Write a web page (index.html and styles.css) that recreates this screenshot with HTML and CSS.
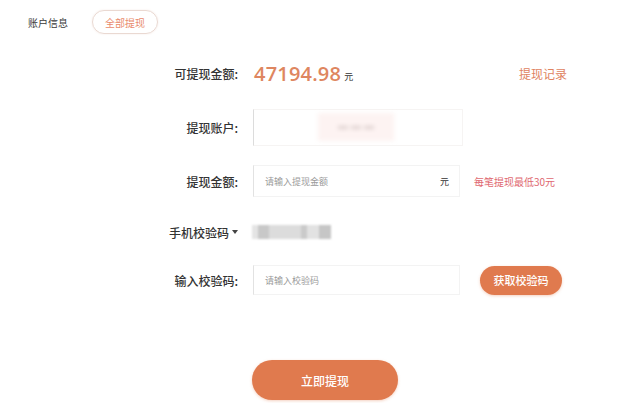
FILE: index.html
```html
<!DOCTYPE html>
<html lang="zh-CN">
<head>
<meta charset="utf-8">
<title>账户信息</title>
<link rel="stylesheet" href="styles.css">
</head>
<body>
<div class="page">
  <header class="tabs">
    <span class="tab-title">账户信息</span>
    <span class="tab-pill">全部提现</span>
  </header>

  <main class="form">
    <div class="row row-tall">
      <span class="label">可提现金额:</span>
      <span class="amount">47194.98</span><span class="unit">元</span>
      <a class="record">提现记录</a>
    </div>

    <div class="row row-tall">
      <span class="label">提现账户:</span>
      <div class="account-box">
        <div class="account-blur"><i></i><i></i><i></i></div>
      </div>
    </div>

    <div class="row row-tall">
      <span class="label">提现金额:</span>
      <div class="input input-amount">
        <span class="placeholder">请输入提现金额</span>
        <span class="input-unit">元</span>
      </div>
      <span class="hint">每笔提现最低30元</span>
    </div>

    <div class="row">
      <span class="label">手机校验码<span class="caret"></span></span>
      <div class="phone-blur"></div>
    </div>

    <div class="row">
      <span class="label">输入校验码:</span>
      <div class="input input-code">
        <span class="placeholder">请输入校验码</span>
      </div>
      <button class="btn btn-code">获取校验码</button>
    </div>

    <div class="submit-wrap">
      <button class="btn btn-submit">立即提现</button>
    </div>
  </main>
</div>
</body>
</html>
```

FILE: styles.css
```css
* { box-sizing: border-box; }

html, body {
  margin: 0;
  padding: 0;
  background: #ffffff;
}

body {
  font-family: "Noto Sans CJK SC", "Liberation Sans", sans-serif;
  color: #333333;
}

.page {
  width: 635px;
  height: 403px;
  overflow: hidden;
}

.tabs {
  display: flex;
  align-items: center;
  padding: 10px 0 0 28px;
  height: 34px;
}

.tab-title {
  font-size: 10px;
  color: #3a3a3a;
  width: 64px;
}

.tab-pill {
  display: flex;
  align-items: center;
  justify-content: center;
  width: 66px;
  height: 24px;
  border: 1px solid #ead9d2;
  border-radius: 12px;
  font-size: 10px;
  color: #e98a6c;
  box-shadow: 0 0 2px rgba(230, 200, 190, 0.4);
}

.form {
  margin: 12px 0 0 150px;
  width: 417px;
}

.row {
  display: flex;
  align-items: center;
  height: 48px;
}

.row-tall { height: 54px; }

.label {
  width: 88px;
  text-align: right;
  font-size: 12px;
  font-weight: 500;
  color: #333333;
  margin-right: 15px;
  white-space: nowrap;
  display: flex;
  align-items: center;
  justify-content: flex-end;
}

.caret {
  display: inline-block;
  width: 0;
  height: 0;
  margin-left: 3px;
  border-left: 3px solid transparent;
  border-right: 3px solid transparent;
  border-top: 4px solid #444;
}

.amount {
  font-family: "Open Sans", "Liberation Sans", sans-serif;
  font-size: 20px;
  font-weight: 600;
  color: #de8660;
  letter-spacing: 0.2px;
  margin-left: 1px;
}

.unit {
  font-size: 9px;
  color: #333;
  margin: 6px 0 0 3px;
}

.record {
  margin-left: auto;
  font-size: 12px;
  color: #e0835f;
}

.account-box {
  width: 210px;
  height: 37px;
  border: 1px solid #f6f4f3;
  border-left: 1px solid #dcdcdc;
  position: relative;
  display: flex;
  align-items: center;
  justify-content: center;
}

.account-blur {
  width: 76px;
  height: 28px;
  margin-left: -4px;
  background: #fdf3f2;
  filter: blur(2px);
  display: flex;
  align-items: center;
  justify-content: center;
  gap: 3px;
}

.account-blur i {
  display: block;
  width: 10px;
  height: 3px;
  background: #dccfcd;
}

.input {
  display: flex;
  align-items: center;
  border: 1px solid #f3f3f3;
  border-left: 1px solid #e2e2e2;
  padding: 0 10px 0 11px;
}

.input-amount {
  width: 207px;
  height: 32px;
}

.input-code {
  width: 207px;
  height: 30px;
}

.placeholder {
  font-size: 9px;
  color: #9a9a9a;
}

.input-unit {
  margin-left: auto;
  font-size: 9px;
  color: #333;
  margin-right: 0;
}

.hint {
  margin-left: 14px;
  font-size: 10px;
  color: #e06870;
}

.phone-blur {
  width: 79px;
  height: 14px;
  margin-left: -1px;
  background: linear-gradient(90deg, #e4e4e4 0 8%, #c8c8c8 8% 22%, #dcdcdc 22% 62%, #cacaca 62% 70%, #e2e2e2 70% 85%, #c6c6c6 85% 100%);
  filter: blur(1px);
}

.btn {
  border: none;
  background: #e07a4e;
  color: #ffffff;
  font-family: "Noto Sans CJK SC", "Liberation Sans", sans-serif;
  cursor: pointer;
  box-shadow: 0 1px 3px rgba(224, 122, 78, 0.35);
}

.btn-code {
  margin-left: 20px;
  width: 82px;
  height: 29px;
  border-radius: 15px;
  font-size: 11px;
  font-weight: 500;
}

.submit-wrap {
  margin-top: 56px;
  padding-left: 102px;
}

.btn-submit {
  width: 146px;
  height: 40px;
  border-radius: 20px;
  font-size: 12px;
  font-weight: 500;
}
```
